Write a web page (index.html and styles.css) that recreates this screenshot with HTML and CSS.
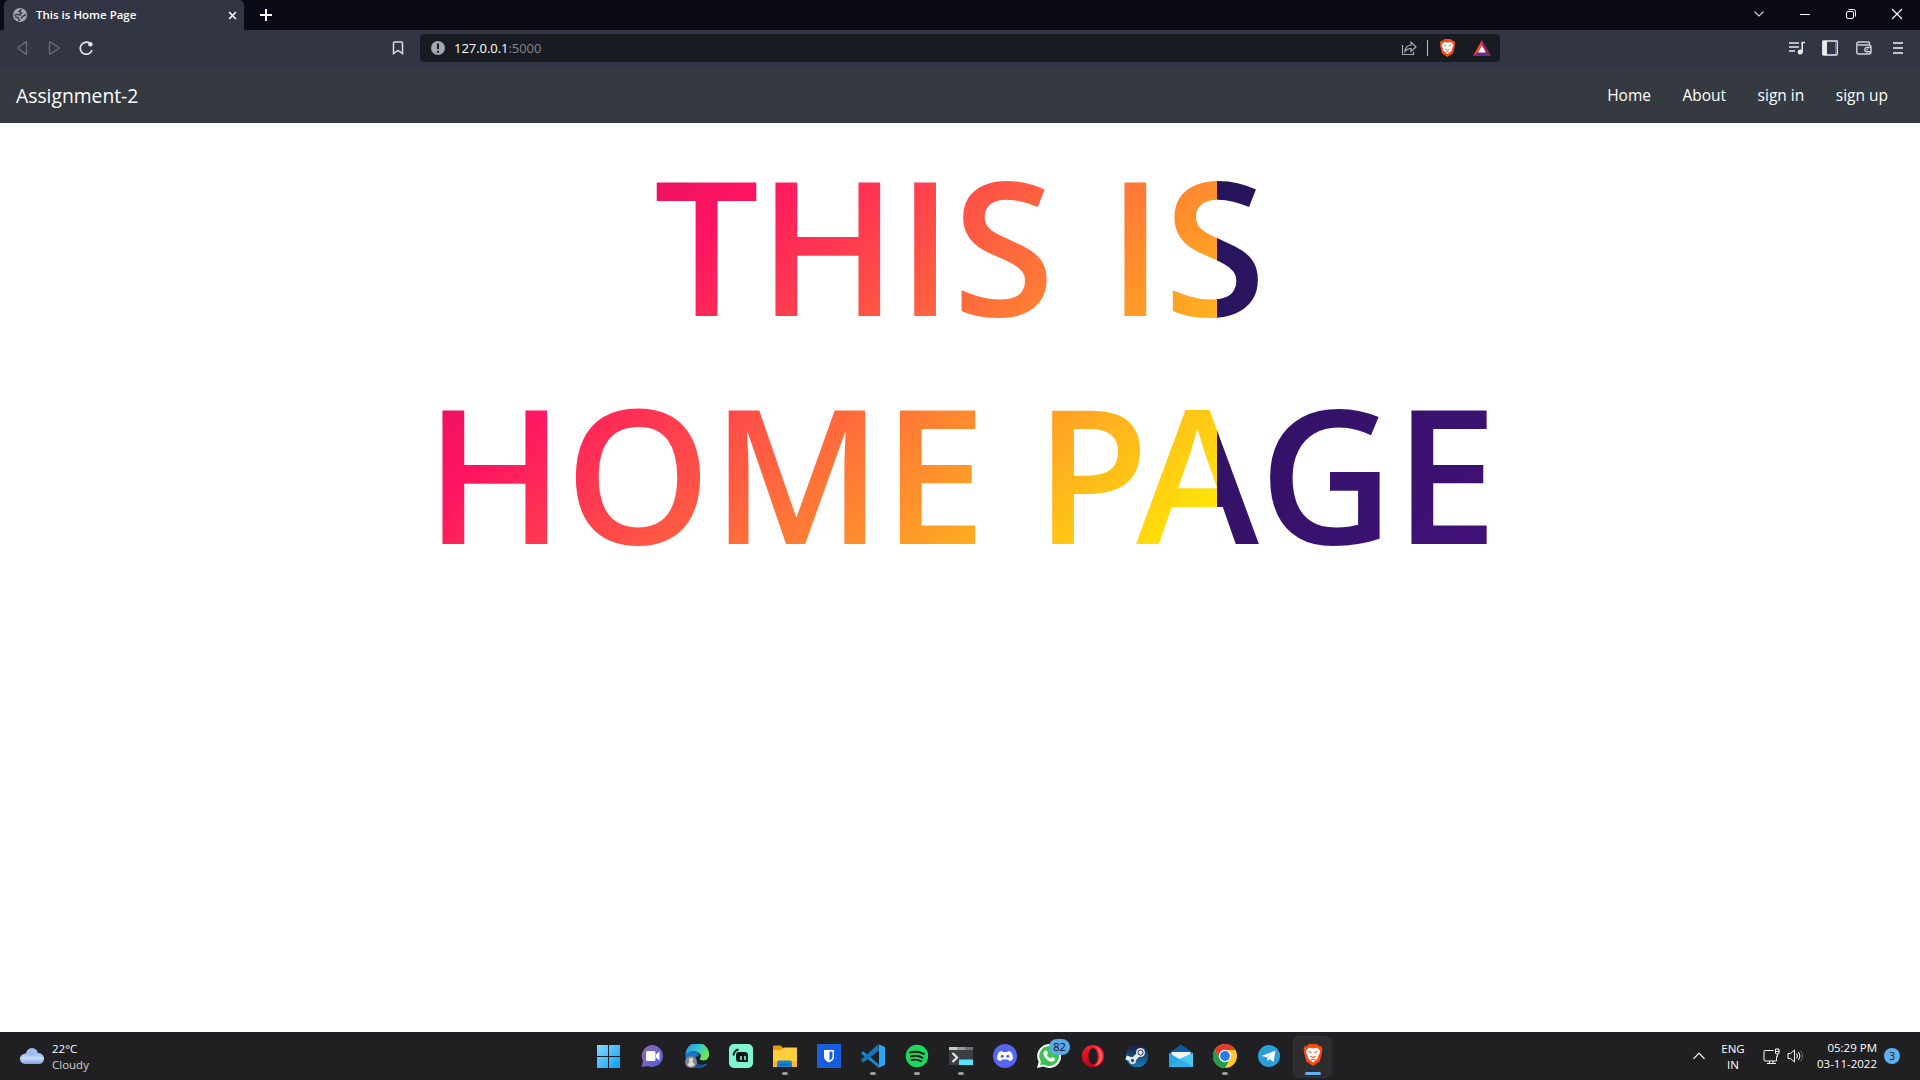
FILE: index.html
```html
<!DOCTYPE html>
<html lang="en">
<head>
<meta charset="utf-8">
<title>This is Home Page</title>
<link rel="stylesheet" href="styles.css">
</head>
<body>
<div class="tabstrip">
  <div class="tab">
    <svg class="favicon" viewBox="0 0 14 14"><circle cx="7" cy="7" r="7" fill="#a3a7af"/><path d="M8.500 1.300 6.300 3.500 8.500 5 7 7 4.500 6.300 1.300 7.200M2 9l3 .5L6.500 13M12.800 6.500 9.500 8.500 8 10.500" fill="none" stroke="#3a3d4b" stroke-width="1.600"/></svg>
    <span class="tab-title">This is Home Page</span>
    <svg class="tab-close" viewBox="0 0 10 10"><path d="M1.200 1.200l7.600 7.600M8.800 1.200 1.200 8.800" stroke="#fff" stroke-width="1.700"/></svg>
  </div>
  <svg class="newtab" viewBox="0 0 12 12"><path d="M6 0v12M0 6h12" stroke="#fff" stroke-width="2"/></svg>
  <div class="window-buttons">
    <svg viewBox="0 0 12 12"><path d="M1.500 3.500 6 8l4.500-4.500" fill="none" stroke="#d5d6da" stroke-width="1.100"/></svg>
    <svg viewBox="0 0 12 12"><path d="M1 6.500h10" stroke="#fff"/></svg>
    <svg viewBox="0 0 12 12"><rect x="1.500" y="3.500" width="7" height="7" rx="1.500" fill="none" stroke="#fff"/><path d="M3.500 1.500H8.500a2 2 0 0 1 2 2v5" fill="none" stroke="#fff"/></svg>
    <svg viewBox="0 0 12 12"><path d="M1 1l10 10M11 1 1 11" stroke="#fff" stroke-width="1.100"/></svg>
  </div>
</div>
<div class="toolbar">
  <div class="nav-buttons">
    <svg viewBox="0 0 14 14"><path d="M11.500 1.300v11.400q0 .6-.8.2L3.200 7.500q-.6-.5 0-1l7.500-5.400q.8-.4.800.2z" fill="none" stroke="#6a6d7b" stroke-width="1.300"/></svg>
    <svg viewBox="0 0 14 14"><path d="M2.500 1.300v11.400q0 .6.800.2l8.500-5.400q.6-.5 0-1L3.300 1.100q-.8-.4-.8.200z" fill="none" stroke="#6a6d7b" stroke-width="1.300"/></svg>
    <svg viewBox="0 0 14 14"><path d="M11 2.500A6 6 0 1 0 13 9" fill="none" stroke="#e4e5e8" stroke-width="1.700"/><circle cx="11.400" cy="3.300" r="2.200" fill="#e4e5e8"/></svg>
  </div>
  <svg class="bookmark" viewBox="0 0 12 14"><path d="M1.500 12.500V2q0-1 1-1h7q1 0 1 1v10.500L6 9.500z" fill="none" stroke="#dcdde0" stroke-width="1.500"/></svg>
  <div class="address">
    <svg class="info" viewBox="0 0 14 14"><circle cx="7" cy="7" r="7" fill="#a2a5ae"/><path d="M7 2.500v5.500M7 9.800v2" stroke="#181b22" stroke-width="2"/></svg>
    <span class="url">127.0.0.1<span class="port">:5000</span></span>
    <svg class="share" viewBox="0 0 16 14"><path d="M1.500 4v9.500h11V11" fill="none" stroke="#a9abb0" stroke-width="1.200"/><path d="M4 10.500Q4.500 4.500 10 4V1.200L15 6l-5 4.500V7.500Q6.500 7.300 4 10.500z" fill="none" stroke="#a9abb0" stroke-width="1.200"/></svg>
    <span class="divider"></span>
    <svg class="shield" viewBox="0 0 20 22"><use href="#lion"/></svg>
    <svg class="rewards" viewBox="0 0 18 16"><path d="M9 0 0 16l9-6z" fill="#ff4724"/><path d="M9 0l9 16-9-5z" fill="#9e1f63"/><path d="M0 16h18l-6-4H6z" fill="#662d91"/><path d="M9 5.500 5.200 12.500h7.600z" fill="#fff"/></svg>
  </div>
  <div class="tools">
    <svg viewBox="0 0 16 14"><path d="M0 2h10M0 6h10M0 10h6M13.200 11V2M12.500 1.500H16" stroke="#e6e7e9" stroke-width="1.600"/><circle cx="11.200" cy="11" r="2.500" fill="#e6e7e9"/></svg>
    <svg viewBox="0 0 16 16"><rect x=".7" y="1" width="14.600" height="14" rx=".8" fill="none" stroke="#e9eaec" stroke-width="1.300"/><path d="M1 1h4v14H1z" fill="#e9eaec"/><path d="M13.500 2v12" stroke="#777a85"/></svg>
    <svg viewBox="0 0 16 14"><path d="M13.500 4V2q0-1-1-1H3Q.800 1 .8 3v8q0 2 2.200 2h10q2 0 2-2V6q0-2-2-2H3Q1 4 .8 2.500" fill="none" stroke="#d0d1d5" stroke-width="1.400"/><path d="M15 6.500h-4.500a2.200 2.200 0 0 0 0 4.300H15M10.500 8.600h1.500" fill="none" stroke="#d0d1d5" stroke-width="1.400"/></svg>
    <svg viewBox="0 0 16 14"><path d="M3 2h10M3 7h10M3 12h10" stroke="#c4c5ca" stroke-width="2"/></svg>
  </div>
</div>
<nav class="navbar">
  <a class="brand">Assignment-2</a>
  <a class="link">Home</a><a class="link">About</a><a class="link">sign in</a><a class="link">sign up</a>
</nav>
<main class="page">
  <h1 class="headline"><span class="line"><span class="w-this">THIS</span> <span class="w-is">IS</span></span><span class="line second">HOME <span class="kern">P</span>AGE</span></h1>
</main>
<footer class="taskbar">
  <div class="weather">
    <svg viewBox="0 0 24 16"><defs><linearGradient id="cl" x1="0" y1="0" x2="0" y2="1"><stop offset="0" stop-color="#8fb2ee"/><stop offset=".5" stop-color="#c5daf8"/><stop offset="1" stop-color="#7da5ea"/></linearGradient></defs><circle cx="12" cy="6" r="6" fill="#9dbcf0"/><path d="M5 5.500c3-.8 4.500.5 6 2 1.500-2.500 4-3.500 7-2.800C21 5 24 7 24 10.500S21.500 16 19 16H5.500C2 16 0 13.500 0 10.700S2 6 5 5.500z" fill="url(#cl)"/></svg>
    <div class="weather-text"><span>22°C</span><span class="dim">Cloudy</span></div>
  </div>
  <div class="apps">
    <div class="app"><svg viewBox="0 0 24 24"><defs><linearGradient id="win" x1="0" y1="0" x2="1" y2="1"><stop stop-color="#80dcff"/><stop offset="1" stop-color="#0f9df5"/></linearGradient></defs><path d="M0 1h11v11H0zM12 1h11v11H12zM0 13h11v11H0zM12 13h11v11H12z" fill="url(#win)"/></svg></div>
    <div class="app"><svg viewBox="0 0 24 24"><defs><linearGradient id="chat" x1="0" y1="0" x2="1" y2="1"><stop stop-color="#9467b8"/><stop offset="1" stop-color="#5062d3"/></linearGradient></defs><path d="M12 1A11 11 0 1 1 6.500 22L.5 23l1.500-6A11 11 0 0 1 12 1z" fill="url(#chat)"/><rect x="5" y="7" width="9.500" height="10" rx="1.500" fill="#fff"/><path d="M15 10.500 18.500 7.500v9l-3.500-3z" fill="#fff"/></svg></div>
    <div class="app"><svg viewBox="0 0 24 24"><defs><linearGradient id="edge" x1="0" y1="0" x2="1" y2=".5"><stop stop-color="#258ad8"/><stop offset=".55" stop-color="#33c9ce"/><stop offset="1" stop-color="#70e84e"/></linearGradient></defs><path d="M.5 11A11.700 11.700 0 0 1 24 10c.5 5-4 7.500-8 6-1.500-.6-1.700-1-.5-2.500C17 11 14 7.800 10 7.800c-5 0-8 2.500-9.500 3.200z" fill="url(#edge)"/><path d="M.5 11C3 7.500 6 6.500 9 7c4 .5 5 3 5 4.500-5 1.500-5.500 6-1 8.500 3 1.500 6.500 1 9.500-.8C20 23 16 24.500 11.500 24 4 23 0 17 .5 11z" fill="#1376c4"/><path d="M11 13c-2 5 3 9 9 7.500-3 3-7 4-10 3-4-3-4-9 1-10.500z" fill="#124c93"/><circle cx="6" cy="18" r="6" fill="#858686"/><circle cx="6" cy="16" r="2.200" fill="#ddd"/><path d="M2.500 21q.5-3 3.500-3t3.500 3q-3.500 3-7 0z" fill="#ddd"/></svg></div>
    <div class="app"><svg viewBox="0 0 24 24"><rect width="24" height="24" rx="5" fill="#80f5d2"/><rect x="7" y="8" width="12" height="10" rx="3" fill="#09161d"/><path d="M4.500 11.500q.5-5 5-6M17 17h2" fill="none" stroke="#09161d" stroke-width="1.800"/><path d="M12 12v4M16 12v4" stroke="#80f5d2" stroke-width="1.600"/></svg></div>
    <div class="app open"><svg viewBox="0 0 24 24"><path d="M0 2.500Q0 1.500 1 1.500h7l2 2.500v6H0z" fill="#e59b0c"/><path d="M0 6h8l3-2.500h13V23H0z" fill="#ffce3d"/><path d="M0 17h24v6H0z" fill="#fabb2b"/><path d="M4 23v-4.500q0-2 2-2h11q2 0 2 2V23z" fill="#1683d4"/><path d="M7 20.500h9" stroke="#0864a8" stroke-width="1.500"/></svg></div>
    <div class="app"><svg viewBox="0 0 24 24"><path d="M0 0h24v24H0z" fill="#175ddc"/><path d="M7 6h10v7q0 3-5 5.500Q7 16 7 13z" fill="#fff"/><path d="M12.500 7.500h3V13q0 2-3 3.500z" fill="#175ddc"/></svg></div>
    <div class="app open"><svg viewBox="0 0 24 24"><path d="M2 7 17.500 20l.5 4L0 9.500z" fill="#168bd2"/><path d="M17 .5.3 15.500v1.500l2 1.500L18 6.500z" fill="#1277bb"/><path d="M17 0l7 3v18l-7 3q1-1 1-2V2q0-1-1-2z" fill="#2ba6ee"/></svg></div>
    <div class="app open"><svg viewBox="0 0 24 24"><circle cx="12" cy="12" r="11.200" fill="#1ed760"/><path d="M5 8.500q7.500-2 14 1.500M6 12.500q6.500-1.800 11.500 1.200M6.500 16q5-1.200 9.500 1.200" fill="none" stroke="#191a1b" stroke-width="1.900" stroke-linecap="round"/></svg></div>
    <div class="app open"><svg viewBox="0 0 24 24"><path d="M0 3h24v18H0z" fill="#3c3f42"/><path d="M0 3h8v3H0z" fill="#ccc"/><path d="M8 3h8v3H8z" fill="#999"/><path d="M16 3h8v3h-8z" fill="#737373"/><path d="M3.500 9 8 13.500 3.500 18" fill="none" stroke="#e4e4e4" stroke-width="2.200"/><path d="M10 15.500h14V21H10z" fill="#50e6ff"/></svg></div>
    <div class="app"><svg viewBox="0 0 24 24"><circle cx="12" cy="12" r="12" fill="#5865f2"/><path d="M8.500 7 10 8h4l1.500-1q2.500.500 3 1.500 1.500 3 1.500 6.500-1.500 1.800-4 2l-1-1.500H9L8 17q-2.500-.2-4-2 0-3.500 1.500-6.500.5-1 3-1.500z" fill="#fff"/><circle cx="9.200" cy="12.300" r="1.500" fill="#5865f2"/><circle cx="14.800" cy="12.300" r="1.500" fill="#5865f2"/></svg></div>
    <div class="app"><svg viewBox="0 0 24 24"><path d="M12 0a12 12 0 1 1-5.500 22.500L0 24l1.700-6.200A12 12 0 0 1 12 0z" fill="#fff"/><path d="M12 2a10 10 0 1 1-5.200 18.500L3 21.300l1-3.700A10 10 0 0 1 12 2z" fill="#3cc351"/><path d="M8.500 6.500q1-.5 1.500.5l1 2.300L9.800 11q1.500 2.700 4 3.500l1.500-1.500 2.700 1.500q0 3-3 3.300-7-1-8.700-8.300 0-2 2.200-3z" fill="#fff"/></svg><span class="badge">82</span></div>
    <div class="app"><svg viewBox="0 0 24 24"><defs><linearGradient id="op" x1="0" y1="0" x2="0" y2="1"><stop stop-color="#ff1b2d"/><stop offset="1" stop-color="#b3061a"/></linearGradient></defs><path d="M12 1a11.200 11.200 0 1 0 0 22.400 11.200 11.200 0 0 0 0-22.400zm0 3.200c3 0 4.500 4 4.500 8s-1.500 8-4.500 8-4.500-4-4.500-8 1.500-8 4.500-8z" fill="url(#op)" fill-rule="evenodd"/><path d="M12.500 2q3 0 6 2.500a11 11 0 0 1 0 15.500q-2.500 2.500-6 2c4-2 5.500-6 5.500-10s-1.500-8-5.500-10z" fill="#ff5964"/></svg></div>
    <div class="app"><svg viewBox="0 0 24 24"><defs><linearGradient id="st" x1="0" y1="0" x2="0" y2="1"><stop stop-color="#171b42"/><stop offset="1" stop-color="#1680b9"/></linearGradient></defs><circle cx="12" cy="12" r="11.200" fill="url(#st)"/><path d="M1 13.500 8 16l5-5" fill="none" stroke="#e6e9ee" stroke-width="4.500"/><circle cx="7.500" cy="16.500" r="3.500" fill="#e6e9ee"/><circle cx="7.500" cy="16.500" r="1.700" fill="#28557e"/><circle cx="15.500" cy="8.500" r="4.500" fill="#e6e9ee"/><circle cx="15.500" cy="8.500" r="2.600" fill="#e6e9ee" stroke="#24335b"/></svg></div>
    <div class="app"><svg viewBox="0 0 24 24"><path d="M0 9 12 .5 24 9v6H0z" fill="#0b5ba9"/><path d="M2.500 8h19v9h-19z" fill="#f1f2f2"/><path d="M0 9l12 7 12-7v14H0z" fill="#27a6e6"/><path d="M24 9v14L10 15z" fill="#4bc9f3"/><path d="M0 23l10-8 4 0 10 8z" fill="#35b7ec" opacity=".6"/></svg></div>
    <div class="app open"><svg viewBox="0 0 24 24"><circle cx="12" cy="12" r="12" fill="#ffcb2d"/><path d="M1.600 6A12 12 0 0 1 22.400 6H12L7 15z" fill="#e33b2e"/><path d="M1.600 6A12 12 0 0 0 12 24l5-9H7z" fill="#229c48"/><circle cx="12" cy="12" r="6.200" fill="#fff"/><circle cx="12" cy="12" r="4.900" fill="#287de8"/></svg></div>
    <div class="app"><svg viewBox="0 0 24 24"><circle cx="12" cy="12" r="11" fill="#2b9fd9"/><path d="M4.500 12 18.500 6.500 16.500 18l-4-3-2 2-.7-3.800z" fill="#fff"/><path d="M9.800 13.200 15.500 8.800 11 14l-.5 3z" fill="#b9dcef"/></svg></div>
    <div class="app open active"><svg viewBox="-2 0 24 24"><g id="lion"><path d="M6 0h8l2 2h2l1.500 3-.7 2 .4 1-2.500 9.500L10 22l-6.700-4.500L.800 8l.4-1L.500 5 2 2h2z" fill="#fb4b14"/><path d="M3.500 6 6 3.800 10 4.500l4-.7L16.500 6l.5 2.500-2 4 .3 1.500-5.300 4.500L4.700 14l.3-1.500-2-4z" fill="#fff"/><path d="M5.500 7.500l3 1M14.500 7.500l-3 1M7.500 12.300 10 13.500l2.500-1.200M8 16l2-1 2 1" fill="none" stroke="#fb4b14" stroke-width="1.100"/></g></svg></div>
  </div>
  <div class="tray">
    <svg class="chevron" viewBox="0 0 12 8"><path d="M.5 6.800 6 1.200l5.500 5.600" fill="none" stroke="#fff" stroke-width="1.200"/></svg>
    <div class="lang"><span>ENG</span><span>IN</span></div>
    <svg class="network" viewBox="0 0 17 17"><path d="M10.500 2.500H2q-1 0-1 1V12q0 1 1 1h11.500v-4.500M4 15.500h9M6.500 13v2.500M10 13v2.500M12.500 1h3.500v4q0 1-1 1h-1.500q-1 0-1-1zM12.500 3.500H16M14.300 6v3" fill="none" stroke="#fff"/></svg>
    <svg class="volume" viewBox="0 0 17 14"><path d="M1 4.500h2.500L7.500 1v12L3.500 9.500H1z" fill="none" stroke="#fff"/><path d="M9.500 4.500q2 2.500 0 5M11.500 3q3 4 0 8" fill="none" stroke="#fff"/><path d="M13.500 1.500q4 5.500 0 11" fill="none" stroke="#67686b"/></svg>
    <div class="clock"><span>05:29 PM</span><span>03-11-2022</span></div>
    <span class="count">3</span>
  </div>
</footer>
</body>
</html>
```
FILE: styles.css
```css
* { box-sizing: border-box; }
body {
  margin: 0;
  width: 1920px;
  height: 1080px;
  overflow: hidden;
  display: flex;
  flex-direction: column;
  background: #fff;
  color: #fff;
  font-family: "Open Sans", "Noto Sans", sans-serif;
}
svg { display: block; flex: none; }

.tabstrip { height: 30px; background: #0a0b14; display: flex; align-items: center; padding-left: 4px; }
.tab { width: 240px; height: 30px; background: #323544; border-radius: 5px 5px 0 0; display: flex; align-items: center; padding: 0 7px 0 9px; }
.favicon { width: 14px; height: 14px; margin-right: 9px; }
.tab-title { flex: 1; font-size: 11.500px; font-weight: 600; padding-bottom: 2px; }
.tab-close { width: 9px; height: 9px; }
.newtab { width: 12px; height: 12px; margin-left: 16px; }
.window-buttons { margin-left: auto; display: flex; gap: 34px; padding: 0 17px 2px 0; }
.window-buttons svg { width: 12px; height: 12px; }

.toolbar { height: 37px; background: #323544; display: flex; align-items: center; padding: 0 0 1px 15px; }
.nav-buttons { display: flex; gap: 18px; width: 377px; }
.nav-buttons svg { width: 14px; height: 14px; }
.bookmark { width: 12px; height: 14px; margin-right: 16px; }
.address { width: 1080px; height: 28px; background: #181b22; border-radius: 4px; display: flex; align-items: center; padding: 0 9px 0 11px; }
.info { width: 14px; height: 14px; margin-right: 9px; }
.url { flex: 1; font-size: 13px; letter-spacing: -0.050px; padding-bottom: 1px; }
.port { color: #85878c; }
.share { width: 16px; height: 14px; margin-right: 10px; }
.divider { width: 1px; height: 16px; background: #c0c1c4; margin-right: 11px; }
.shield { width: 17px; height: 18px; margin-right: 17px; }
.rewards { width: 18px; height: 16px; }
.tools { margin-left: auto; display: flex; align-items: center; gap: 18px; padding-right: 14px; }
.tools svg { width: 16px; height: 16px; }
.tools svg:first-child { margin-right: -1px; }

.navbar { height: 56px; background: #343a40; display: flex; align-items: center; padding: 0 32px 0 16px; }
.brand { flex: 1; font-size: 19.300px; }
.link { font-size: 15.500px; margin-left: 31.500px; white-space: nowrap; }

.page { flex: 1; }
.headline {
  width: 1070px;
  height: 463px;
  margin: 0 auto;
  padding-top: 7px;
  font-size: 186px;
  font-weight: 600;
  line-height: 228px;
  white-space: nowrap;
  color: transparent;
  background-image: linear-gradient(135deg, #231557 0%, #44107a 29%, #ff1361 67%, #fff800 100%);
  background-size: 2136px 456px;
  background-position: 792px 0;
  -webkit-background-clip: text;
  background-clip: text;
}
.line { display: block; text-align: center; }
.second { padding-right: 8px; }
.w-this { letter-spacing: -1px; margin-right: 5px; }
.kern { letter-spacing: -13px; }

.taskbar { height: 48px; background: #202022; display: grid; grid-template-columns: 587px 748px 1fr; align-items: center; }
.weather { display: flex; align-items: center; gap: 8px; padding-left: 20px; }
.weather svg { width: 24px; height: 16px; }
.weather-text { display: flex; flex-direction: column; font-size: 11.500px; line-height: 16px; padding-top: 1px; }
.dim { color: #d2d2d2; }
.apps { display: grid; grid-template-columns: repeat(17, 44px); }
.app { position: relative; height: 48px; display: flex; align-items: center; justify-content: center; }
.app svg { width: 24px; height: 24px; }
.app.open::after { content: ""; position: absolute; left: 19px; bottom: 5px; width: 6px; height: 3px; border-radius: 2px; background: #999; }
.app.active::before { content: ""; position: absolute; left: 2px; top: 4px; width: 35px; height: 40px; border-radius: 5px; background: #2d2d2f; border: 1px solid #353537; box-shadow: 4px 0 0 -1px #29292b; }
.app.active svg { position: relative; }
.app.active::after { left: 14px; width: 16px; background: #60b0ee; }
.badge { position: absolute; left: 22px; top: 7px; width: 21px; height: 16px; border-radius: 8px; background: #58a9e6; color: #111; font-size: 11px; line-height: 16px; text-align: center; }
.tray { display: flex; align-items: center; justify-content: flex-end; padding-right: 20px; font-size: 11.500px; }
.chevron { width: 12px; height: 8px; margin-right: 16px; }
.lang, .clock { display: flex; flex-direction: column; line-height: 16px; }
.lang { align-items: center; width: 24px; margin-right: 18px; font-size: 11.500px; padding-top: 1px; }
.network { width: 17px; height: 17px; margin-right: 7px; }
.volume { width: 17px; height: 14px; margin-right: 15px; }
.clock { align-items: flex-end; width: 58px; margin-right: 7px; white-space: nowrap; }
.count { width: 16px; height: 16px; border-radius: 8px; background: #60b0ee; color: #111; font-size: 10px; line-height: 16px; text-align: center; }
```
